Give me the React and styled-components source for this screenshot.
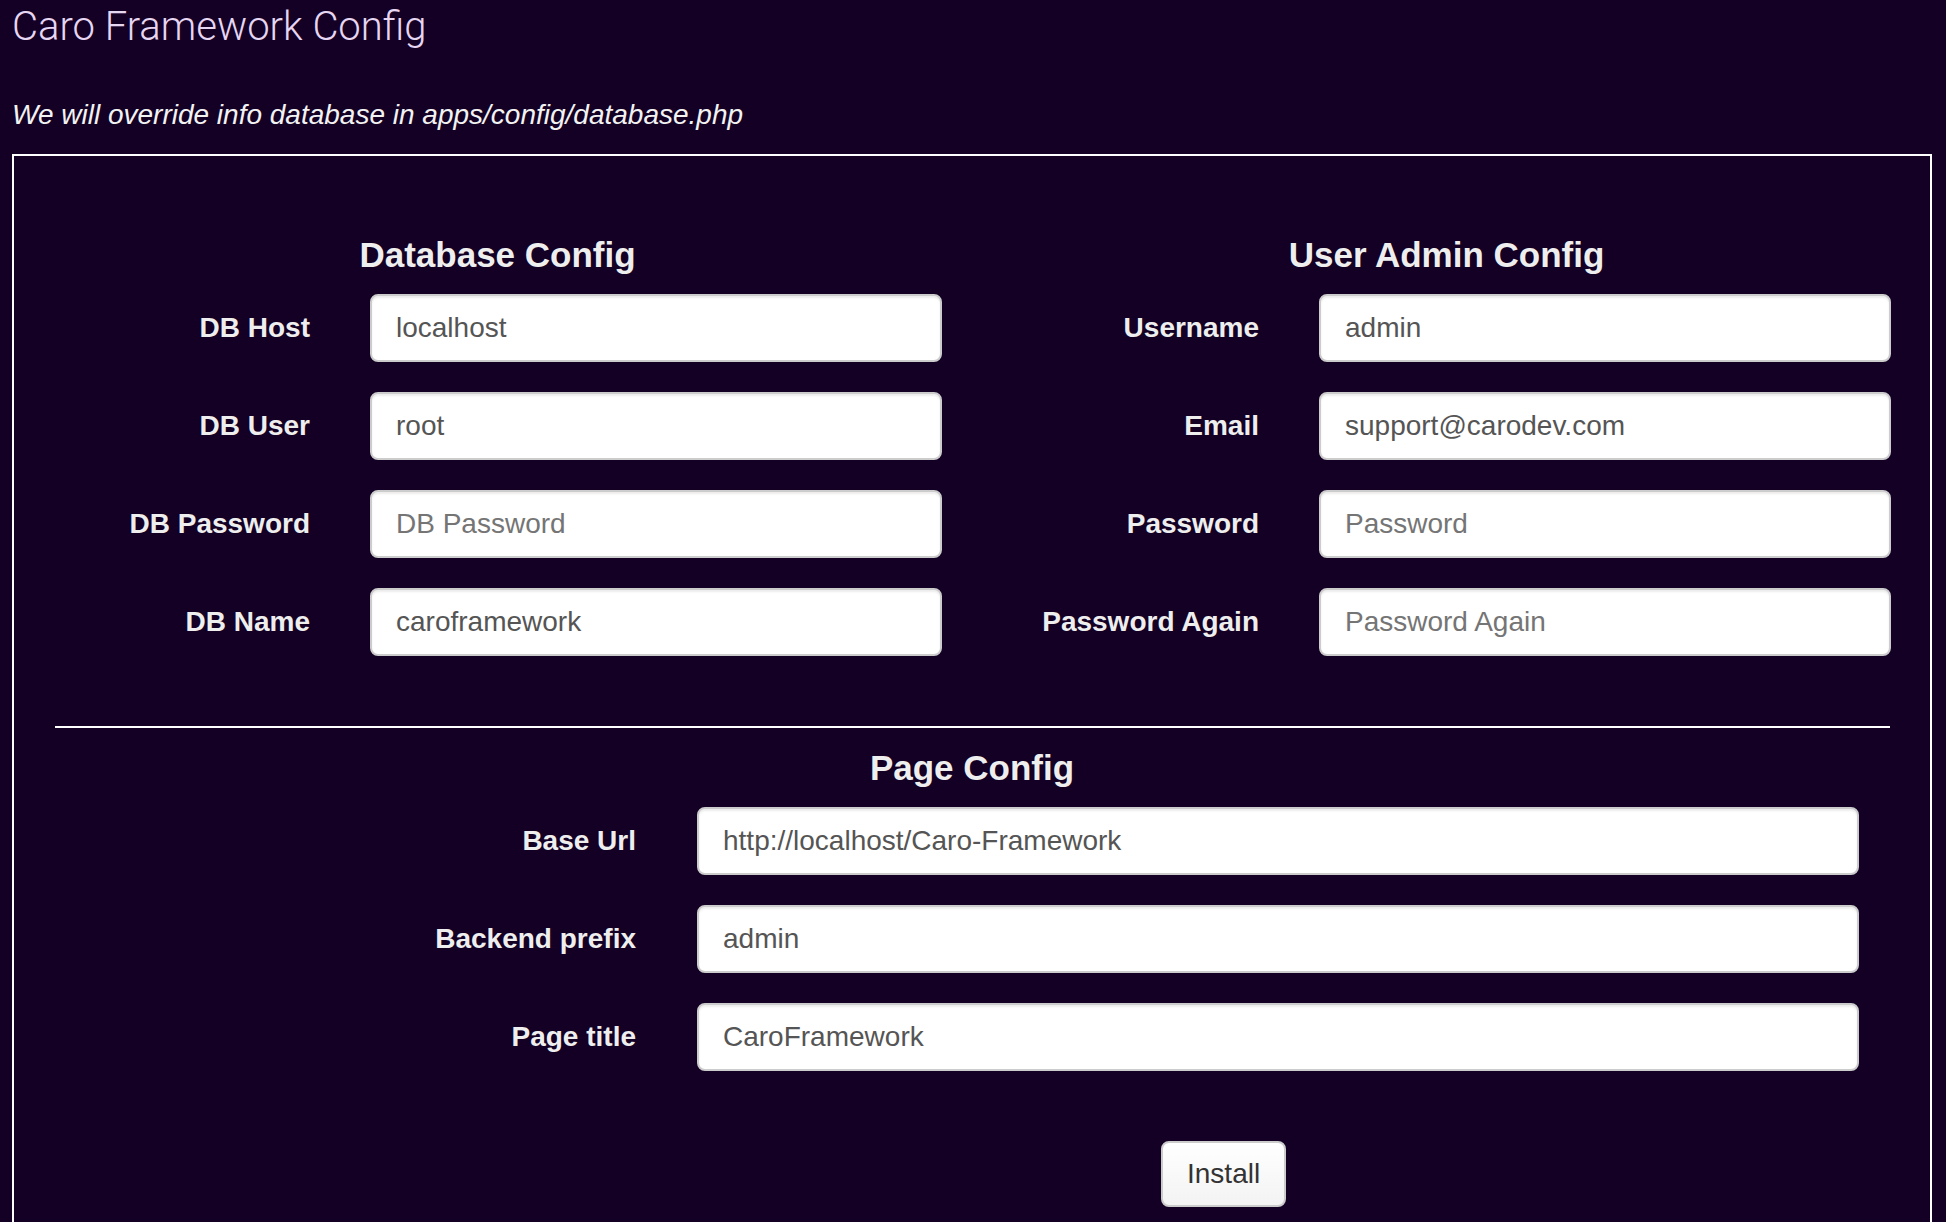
import React from 'react';
import styled, { createGlobalStyle } from 'styled-components';

const GlobalStyle = createGlobalStyle`
	html, body {
		margin: 0;
		padding: 0;
		background: #130024;
	}
	body {
		font-family: "Liberation Sans", Arial, Helvetica, sans-serif;
		color: #eeeeee;
	}
`;

const Page = styled.div`
	min-height: 100vh;
	padding: 0 14px 0 12px;
	background: #130024;
`;

const Title = styled.h1`
	margin: 3px 0 0;
	font-family: Roboto, "Liberation Sans", sans-serif;
	font-weight: 300;
	font-size: 40px;
	line-height: 48px;
	color: #e6d6f2;
`;

const Notice = styled.p`
	margin: 44px 0 19px;
	font-size: 28px;
	line-height: 40px;
	font-style: italic;
	color: #f2f2f2;
`;

const Panel = styled.form`
	border: 2px solid #ffffff;
	padding: 79px 26px 40px 26px;
`;

const Columns = styled.div`
	display: grid;
	grid-template-columns: 915px 915px;
	column-gap: 34px;
`;

const Section = styled.div`
	display: flex;
	flex-direction: column;
	gap: 30px;
`;

const Heading = styled.h4`
	margin: 0 0 -11px;
	text-align: center;
	font-size: 35px;
	line-height: 40px;
	font-weight: bold;
	color: #eeeeee;
`;

const Row = styled.div`
	display: grid;
	grid-template-columns: ${props => props.labelWidth}px ${props => props.inputWidth}px;
	column-gap: ${props => props.gap}px;
	align-items: center;
`;

const Label = styled.label`
	text-align: right;
	font-size: 28px;
	font-weight: bold;
	color: #eeeeee;
`;

const Input = styled.input`
	box-sizing: border-box;
	width: 100%;
	height: 68px;
	padding: 0 24px;
	border: 2px solid #cccccc;
	border-radius: 8px;
	background: #ffffff;
	box-shadow: inset 0 2px 2px rgba(0, 0, 0, 0.075);
	font-family: "Liberation Sans", Arial, sans-serif;
	font-size: 28px;
	color: #555555;
	outline: none;

	::placeholder {
		color: #999999;
	}
`;

const Divider = styled.hr`
	margin: 70px 14px 20px 15px;
	border: 0;
	height: 2px;
	background: #ffffff;
`;

const ButtonRow = styled.div`
	display: flex;
	padding: 70px 0 0 1121px;
`;

const Button = styled.button`
	height: 66px;
	padding: 0 24px;
	border: 2px solid #cccccc;
	border-radius: 8px;
	background: linear-gradient(#ffffff, #f3f3f3);
	font-family: "Liberation Sans", Arial, sans-serif;
	font-size: 28px;
	color: #333333;
	cursor: pointer;
`;

const Field = ({ label, value, placeholder, layout }) => (
	<Row {...layout}>
		<Label>{label}</Label>
		<Input defaultValue={value} placeholder={placeholder} />
	</Row>
);

const halfLayout = { labelWidth: 270, inputWidth: 572, gap: 60 };
const fullLayout = { labelWidth: 596, inputWidth: 1162, gap: 61 };

const dbFields = [
	{ label: 'DB Host', value: 'localhost' },
	{ label: 'DB User', value: 'root' },
	{ label: 'DB Password', placeholder: 'DB Password' },
	{ label: 'DB Name', value: 'caroframework' },
];

const adminFields = [
	{ label: 'Username', value: 'admin' },
	{ label: 'Email', value: 'support@carodev.com' },
	{ label: 'Password', placeholder: 'Password' },
	{ label: 'Password Again', placeholder: 'Password Again' },
];

const pageFields = [
	{ label: 'Base Url', value: 'http://localhost/Caro-Framework' },
	{ label: 'Backend prefix', value: 'admin' },
	{ label: 'Page title', value: 'CaroFramework' },
];

export default function App() {
	return (
		<Page>
			<GlobalStyle />
			<Title>Caro Framework Config</Title>
			<Notice>We will override info database in apps/config/database.php</Notice>
			<Panel onSubmit={e => e.preventDefault()}>
				<Columns>
					<Section>
						<Heading>Database Config</Heading>
						{dbFields.map(f => (
							<Field key={f.label} {...f} layout={halfLayout} />
						))}
					</Section>
					<Section>
						<Heading>User Admin Config</Heading>
						{adminFields.map(f => (
							<Field key={f.label} {...f} layout={halfLayout} />
						))}
					</Section>
				</Columns>
				<Divider />
				<Section>
					<Heading>Page Config</Heading>
					{pageFields.map(f => (
						<Field key={f.label} {...f} layout={fullLayout} />
					))}
				</Section>
				<ButtonRow>
					<Button type="submit">Install</Button>
				</ButtonRow>
			</Panel>
		</Page>
	);
}
